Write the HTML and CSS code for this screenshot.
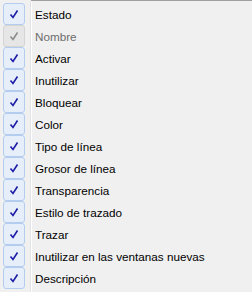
FILE: index.html
```html
<!DOCTYPE html>
<html lang="es">
<head>
  <meta charset="utf-8" />
  <title>Columnas</title>
  <link rel="stylesheet" href="styles.css">
</head>
<body>
<div class="menu">
  <ul class="items">
    <li class="item"><span class="box"><svg viewBox="0 0 12 12"><path d="M2.5 6.5 L5 9.5 L9.5 2.5"/></svg></span><span class="label">Estado</span></li>
    <li class="item off"><span class="box"><svg viewBox="0 0 12 12"><path d="M2.5 6.5 L5 9.5 L9.5 2.5"/></svg></span><span class="label">Nombre</span></li>
    <li class="item"><span class="box"><svg viewBox="0 0 12 12"><path d="M2.5 6.5 L5 9.5 L9.5 2.5"/></svg></span><span class="label">Activar</span></li>
    <li class="item"><span class="box"><svg viewBox="0 0 12 12"><path d="M2.5 6.5 L5 9.5 L9.5 2.5"/></svg></span><span class="label">Inutilizar</span></li>
    <li class="item"><span class="box"><svg viewBox="0 0 12 12"><path d="M2.5 6.5 L5 9.5 L9.5 2.5"/></svg></span><span class="label">Bloquear</span></li>
    <li class="item"><span class="box"><svg viewBox="0 0 12 12"><path d="M2.5 6.5 L5 9.5 L9.5 2.5"/></svg></span><span class="label">Color</span></li>
    <li class="item"><span class="box"><svg viewBox="0 0 12 12"><path d="M2.5 6.5 L5 9.5 L9.5 2.5"/></svg></span><span class="label">Tipo de línea</span></li>
    <li class="item"><span class="box"><svg viewBox="0 0 12 12"><path d="M2.5 6.5 L5 9.5 L9.5 2.5"/></svg></span><span class="label">Grosor de línea</span></li>
    <li class="item"><span class="box"><svg viewBox="0 0 12 12"><path d="M2.5 6.5 L5 9.5 L9.5 2.5"/></svg></span><span class="label">Transparencia</span></li>
    <li class="item"><span class="box"><svg viewBox="0 0 12 12"><path d="M2.5 6.5 L5 9.5 L9.5 2.5"/></svg></span><span class="label">Estilo de trazado</span></li>
    <li class="item"><span class="box"><svg viewBox="0 0 12 12"><path d="M2.5 6.5 L5 9.5 L9.5 2.5"/></svg></span><span class="label">Trazar</span></li>
    <li class="item"><span class="box"><svg viewBox="0 0 12 12"><path d="M2.5 6.5 L5 9.5 L9.5 2.5"/></svg></span><span class="label">Inutilizar en las ventanas nuevas</span></li>
    <li class="item"><span class="box"><svg viewBox="0 0 12 12"><path d="M2.5 6.5 L5 9.5 L9.5 2.5"/></svg></span><span class="label">Descripción</span></li>
  </ul>
</div>
</body>
</html>
```

FILE: styles.css
```css
*{margin:0;padding:0;box-sizing:border-box;}
html,body{width:252px;height:292px;background:#f0f0f0;overflow:hidden;}
body{font-family:"Liberation Sans",Arial,sans-serif;font-size:11.7px;color:#000;}
.menu{position:relative;width:252px;height:292px;border-top:1px solid #a0a0a0;
  background:linear-gradient(to right,#f0f0f0 0,#f0f0f0 30px,#e2e3e3 30px,#e2e3e3 31px,#fff 31px,#fff 32px,#f0f0f0 32px);}
.menu::before{content:"";position:absolute;left:0;top:-1px;width:31px;height:1px;background:#f0f0f0;}
.items{list-style:none;padding-top:2px;}
.item{display:flex;align-items:center;height:22px;}
.box{display:flex;align-items:center;justify-content:center;width:22px;height:22px;margin-left:3px;
  border:1px solid #b4cdef;border-radius:3px;background:#e6eefa;}
.box svg{width:12px;height:12px;fill:none;stroke:#1c1ca8;stroke-width:1.6;}
.label{margin-left:10px;white-space:nowrap;}
.off .box{border-color:#d4d4d4;background:#e6e6e6;}
.off .box svg{stroke:#8a8a8a;}
.off .label{color:#6d6d6d;}
```
